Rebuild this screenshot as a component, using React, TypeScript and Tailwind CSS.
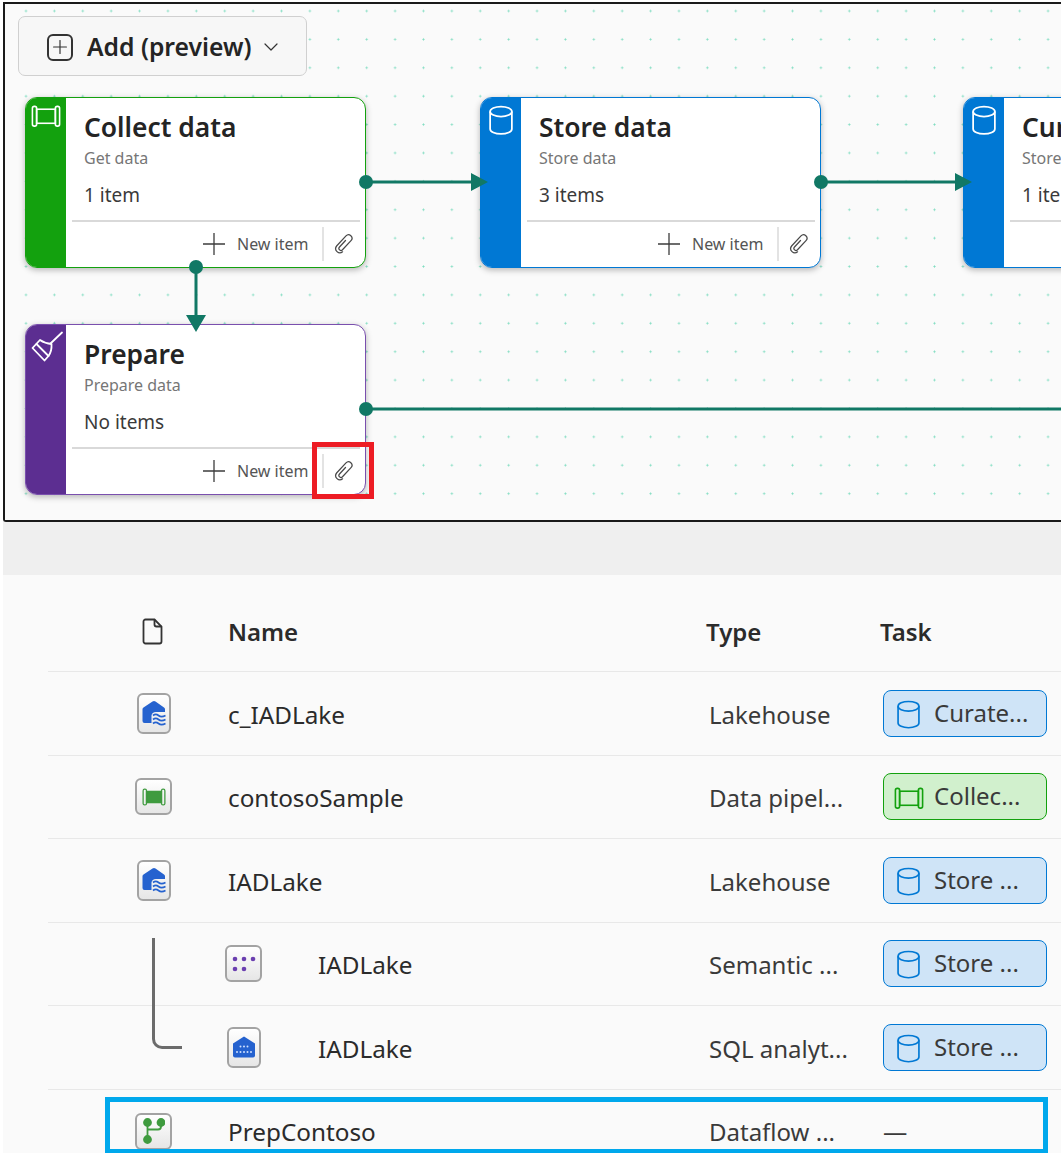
import { ChevronDown, Plus } from "lucide-react";
import type { ReactNode } from "react";

const TEAL = "#117865";

function PipelineGlyph({ color, size, fill = "none" }: { color: string; size: number; fill?: string }) {
  return (
    <svg width={size} height={size * 0.75} viewBox="0 0 32 24" fill="none" stroke={color} strokeWidth="1.7">
      <rect x="6" y="4.5" width="20" height="15" fill={fill} />
      <rect x="1.5" y="1.5" width="4.5" height="21" rx="2" />
      <rect x="26" y="1.5" width="4.5" height="21" rx="2" />
    </svg>
  );
}

function DatabaseGlyph({ color, size }: { color: string; size: number }) {
  return (
    <svg width={size} height={size * 1.27} viewBox="0 0 22 28" fill="none" stroke={color} strokeWidth="1.6">
      <ellipse cx="11" cy="6" rx="10" ry="4.6" />
      <path d="M1 6v16c0 2.6 4.5 4.6 10 4.6s10-2 10-4.6V6" />
    </svg>
  );
}

function BroomGlyph() {
  return (
    <svg className="-mt-[1px] ml-[1px]" width="32" height="32" viewBox="5 5 32 32" fill="none" stroke="white" strokeWidth="1.8" strokeLinejoin="round" strokeLinecap="round">
      <path d="M24.500 17.500 36 6.500" />
      <path d="M6.500 22 18.500 34.500 22.500 30Q26 25 25.500 18 19 17.500 14 14z" />
      <path d="M10.500 18 22.500 30" />
    </svg>
  );
}

function ClipGlyph() {
  return (
    <svg width="22" height="22" viewBox="0 0 22 22" fill="none" stroke="#4a4a4a" strokeWidth="1.250" strokeLinecap="round">
      <path d="M12.500 7.500 6.500 14a2 2 0 0 0 3 2.800L18 7.600a3.400 3.400 0 0 0-5-4.700L3.600 13a4.200 4.200 0 0 0 6 5.800" />
    </svg>
  );
}

function LakehouseGlyph({ dots }: { dots?: boolean }) {
  if (dots) {
    return (
      <svg width="24" height="24" viewBox="0 0 24 24">
        <path d="M12 1.500 23 8.500v12a2 2 0 0 1-2 2H3a2 2 0 0 1-2-2v-12z" fill="#2562cf" strokeLinejoin="round" />
        <g fill="#cfe0ff">
          {[8.5, 12, 15.500].map((x) =>
            [11.500, 17].map((y) => <circle key={`${x}-${y}`} cx={x} cy={y} r="1" />),
          )}
          <circle cx="5" cy="17" r="1" />
          <circle cx="19" cy="17" r="1" />
        </g>
      </svg>
    );
  }
  return (
    <svg width="24" height="26" viewBox="0 0 24 26">
      <path
        d="M10.500 1.500a2.500 2.500 0 0 1 3 0L22 7.500a2 2 0 0 1 1 1.700V12h-9q-4 0-4.500 3.500V23H2.500A2 2 0 0 1 .500 21V9.200a2 2 0 0 1 1-1.700z"
        fill="#2562cf"
      />
      <path
        d="M11 15.500c2-1.600 3.500-1.600 5.500 0s4 1.600 7 0M11 19.500c2-1.600 3.500-1.600 5.500 0s4 1.600 7 0M11 23.500c2-1.600 3.500-1.600 5.500 0s4 1.600 7 0"
        fill="none"
        stroke="#2562cf"
        strokeWidth="1.700"
      />
    </svg>
  );
}

function SemanticGlyph() {
  return (
    <svg width="26" height="18" viewBox="0 0 26 18" fill="#6b3fb0">
      <circle cx="4" cy="4" r="2.300" />
      <circle cx="13" cy="4" r="2.300" />
      <circle cx="22" cy="4" r="2.300" />
      <circle cx="4" cy="14" r="2.300" />
      <circle cx="13" cy="14" r="2.300" />
    </svg>
  );
}

function DataflowGlyph() {
  return (
    <svg width="22" height="26" viewBox="0 0 22 26" fill="none" stroke="#3f9b3f" strokeWidth="1.800">
      <circle cx="4.500" cy="4.500" r="3.500" fill="#3f9b3f" />
      <circle cx="18" cy="4.500" r="3.500" fill="#3f9b3f" />
      <circle cx="4.500" cy="21.500" r="3.500" fill="#3f9b3f" />
      <path d="M4.500 6v14M18 6v2.500a3 3 0 0 1-3 3H4.500" />
    </svg>
  );
}

function ItemIcon({ tall, children }: { tall?: boolean; children: ReactNode }) {
  return (
    <div
      className={`flex shrink-0 items-center justify-center rounded-[6px] border-2 border-[#a3a3a3] bg-gradient-to-b from-white to-[#e6e6e6] ${
        tall ? "h-[41px] w-[34px]" : "h-[37px] w-[37px]"
      }`}
    >
      {children}
    </div>
  );
}

type NodeProps = {
  title: string;
  sub: string;
  count: string;
  band: string;
  edge: string;
  icon: ReactNode;
  left: string;
  top: string;
};

function TaskNode({ title, sub, count, band, edge, icon, left, top }: NodeProps) {
  return (
    <div className={`absolute flex h-[171px] w-[341px] overflow-hidden rounded-[12px] border bg-white shadow-[0_2px_6px_rgba(0,0,0,0.28)] ${edge} ${left} ${top}`}>
      <div className={`flex w-[40px] shrink-0 justify-center pt-[7px] ${band}`}>{icon}</div>
      <div className="flex min-w-0 flex-1 flex-col">
        <div className="flex-1 pl-[18px]">
          <div className="mt-[10px] whitespace-nowrap text-[26.400px] leading-[38px] font-semibold text-[#242424]">{title}</div>
          <div className="mt-[2px] whitespace-nowrap text-[16px] leading-[20px] text-[#767676]">{sub}</div>
          <div className="mt-[14px] whitespace-nowrap text-[19px] leading-[26px] text-[#3a3a3a]">{count}</div>
        </div>
        <div className="mr-[5px] ml-[6px] h-[2px] bg-[#d9d9d9]" />
        <div className="flex h-[45px] items-center pb-[2px]">
          <svg className="ml-[137px]" width="22" height="22" viewBox="0 0 22 22" stroke="#3c3c3c" strokeWidth="1.300">
            <path d="M11 0v22M0 11h22" />
          </svg>
          <span className="ml-[12px] whitespace-nowrap text-[16px] text-[#555]">New item</span>
          <div className="ml-[13px] h-[34px] w-[2px] bg-[#e3e3e3]" />
          <div className="ml-[9px]">
            <ClipGlyph />
          </div>
        </div>
      </div>
    </div>
  );
}

function Connectors() {
  return (
    <svg className="absolute top-[-4px] left-[-5px]" width="1061" height="522" fill={TEAL} stroke="none">
      <g stroke={TEAL} strokeWidth="3">
        <path d="M367 182h108M821 182h138M196 267v52M367 409h694" />
      </g>
      <circle cx="366" cy="182" r="7" />
      <circle cx="821" cy="182" r="7" />
      <circle cx="196" cy="267" r="7" />
      <circle cx="366" cy="409" r="7" />
      <path d="M471 173l17 9-17 9zM955 173l17 9-17 9zM186 315h20l-10 17z" />
    </svg>
  );
}

type Row = {
  name: string;
  type: string;
  task?: string;
  tone?: "blue" | "green";
  icon: ReactNode;
  child?: boolean;
};

const ROWS: Row[] = [
  { name: "c_IADLake", type: "Lakehouse", task: "Curate...", tone: "blue", icon: <ItemIcon tall><LakehouseGlyph /></ItemIcon> },
  {
    name: "contosoSample",
    type: "Data pipel...",
    task: "Collec...",
    tone: "green",
    icon: <ItemIcon><PipelineGlyph color="#3f9b3f" size={24} fill="#3f9b3f" /></ItemIcon>,
  },
  { name: "IADLake", type: "Lakehouse", task: "Store ...", tone: "blue", icon: <ItemIcon tall><LakehouseGlyph /></ItemIcon> },
  { name: "IADLake", type: "Semantic ...", task: "Store ...", tone: "blue", child: true, icon: <ItemIcon><SemanticGlyph /></ItemIcon> },
  { name: "IADLake", type: "SQL analyt...", task: "Store ...", tone: "blue", child: true, icon: <ItemIcon tall><LakehouseGlyph dots /></ItemIcon> },
];

function TaskPill({ label, tone }: { label: string; tone: "blue" | "green" }) {
  const blue = tone === "blue";
  return (
    <div
      className={`flex h-[47px] w-[164px] items-center rounded-[8px] border pb-[1px] text-[24px] text-[#3a3a3a] ${
        blue ? "border-[#0078d4] bg-[#cfe4f7] pl-[13px]" : "border-[#13a10e] bg-[#d1f0cd] pl-[10px]"
      }`}
    >
      <span className={`mt-[3px] ${blue ? "mr-[14px]" : "mr-[10px]"}`}>
        {blue ? <DatabaseGlyph color="#0078d4" size={23} /> : <PipelineGlyph color="#13a10e" size={30} />}
      </span>
      <span className="whitespace-nowrap">{label}</span>
    </div>
  );
}

function ItemRow({ row }: { row: Row }) {
  return (
    <div className="flex h-[83.500px] items-center border-b border-[#e8e8e8] text-[24.300px] text-[#2b2b2b]">
      <div className={`flex shrink-0 items-center ${row.child ? "w-[270px]" : "w-[180px]"}`}>
        <div className={`flex justify-center ${row.child ? "ml-[177px] w-[37px]" : "ml-[87px] w-[37px]"}`}>{row.icon}</div>
      </div>
      <div className={`mt-[3px] whitespace-nowrap ${row.child ? "w-[391px]" : "w-[481px]"}`}>{row.name}</div>
      <div className="mt-[3px] w-[174px] whitespace-nowrap text-[24px] text-[#3a3a3a]">{row.type}</div>
      {row.task && row.tone && <TaskPill label={row.task} tone={row.tone} />}
    </div>
  );
}

export default function App() {
  return (
    <div className="h-[1153px] w-[1061px] overflow-hidden bg-white font-['Noto_Sans',sans-serif]">
      <div className="relative mt-[2px] ml-[3px] h-[520px] overflow-hidden rounded-bl-[3px] border-t-2 border-b-2 border-l-2 border-[#1a1a1a] bg-[#fafafa] bg-[radial-gradient(circle,#7fdcc0_0.9px,transparent_1.1px)] bg-[size:28.400px_28.400px] bg-[position:6.800px_-7.200px]">
        <button className="absolute top-[12px] left-[13px] flex h-[60px] w-[289px] items-center rounded-[7px] border border-[#d0d0d0] bg-[#f7f7f7] pt-[2px] text-[24.700px] font-semibold text-[#242424]">
          <span className="ml-[28px] flex h-[27px] w-[26px] items-center justify-center rounded-[6px] border-2 border-[#333]">
            <Plus size={24} strokeWidth={1.3} color="#333" />
          </span>
          <span className="ml-[14px] whitespace-nowrap">Add (preview)</span>
          <ChevronDown size={24} strokeWidth={1.2} color="#333" className="ml-[8px]" />
        </button>

        <TaskNode
          title="Collect data"
          sub="Get data"
          count="1 item"
          band="bg-[#13a10e]"
          edge="border-[#13a10e]"
          icon={<PipelineGlyph color="white" size={30} />}
          left="left-[20px]"
          top="top-[93px]"
        />
        <TaskNode
          title="Store data"
          sub="Store data"
          count="3 items"
          band="bg-[#0078d4]"
          edge="border-[#0078d4]"
          icon={<DatabaseGlyph color="white" size={24} />}
          left="left-[475px]"
          top="top-[93px]"
        />
        <TaskNode
          title="Curate data"
          sub="Store data"
          count="1 item"
          band="bg-[#0078d4]"
          edge="border-[#0078d4]"
          icon={<DatabaseGlyph color="white" size={24} />}
          left="left-[958px]"
          top="top-[93px]"
        />
        <TaskNode
          title="Prepare"
          sub="Prepare data"
          count="No items"
          band="bg-[#5c2e91]"
          edge="border-[#7a4fae]"
          icon={<BroomGlyph />}
          left="left-[20px]"
          top="top-[320px]"
        />
        <Connectors />
        <div className="absolute top-[438px] left-[307px] h-[57px] w-[62px] border-[5px] border-[#ed1c24]" />
      </div>

      <div className="ml-[3px] h-[53px] bg-[#efefef]" />

      <div className="relative ml-[3px] h-[578px] overflow-hidden bg-[#fafafa] pl-[45px]">
        <div className="flex h-[97px] items-center border-b border-[#e8e8e8] pt-[17px] text-[24px] font-semibold text-[#2b2b2b]">
          <div className="w-[180px] shrink-0 pl-[94px]">
            <svg width="22" height="27" viewBox="0 0 22 27" fill="none" stroke="#333" strokeWidth="1.800">
              <path d="M3.500 1.500h9l7 7v15a2 2 0 0 1-2 2h-14a2 2 0 0 1-2-2v-20a2 2 0 0 1 2-2z" />
              <path d="M12.500 1.500v5a2 2 0 0 0 2 2h5" />
            </svg>
          </div>
          <div className="w-[478px]">Name</div>
          <div className="w-[174px]">Type</div>
          <div>Task</div>
        </div>

        {ROWS.map((row, i) => (
          <ItemRow key={i} row={row} />
        ))}

        <div className="flex h-[83.500px] items-center text-[24.300px] text-[#2b2b2b]">
          <div className="w-[180px] shrink-0 pl-[87px]">
            <ItemIcon>
              <DataflowGlyph />
            </ItemIcon>
          </div>
          <div className="mt-[2px] w-[481px] whitespace-nowrap">PrepContoso</div>
          <div className="mt-[2px] w-[174px] whitespace-nowrap text-[24px] text-[#3a3a3a]">Dataflow ...</div>
          <div className="text-[#3a3a3a]">—</div>
        </div>

        <div className="absolute top-[363px] left-[149px] h-[62px] w-[3px] bg-[#6b6b6b]" />
        <div className="absolute top-[425px] left-[149px] h-[49px] w-[30px] rounded-bl-[10px] border-b-[3px] border-l-[3px] border-[#6b6b6b]" />
        <div className="absolute top-[522px] left-[102px] h-[57px] w-[943px] border-[5px] border-[#00a8ec]" />
      </div>
    </div>
  );
}
